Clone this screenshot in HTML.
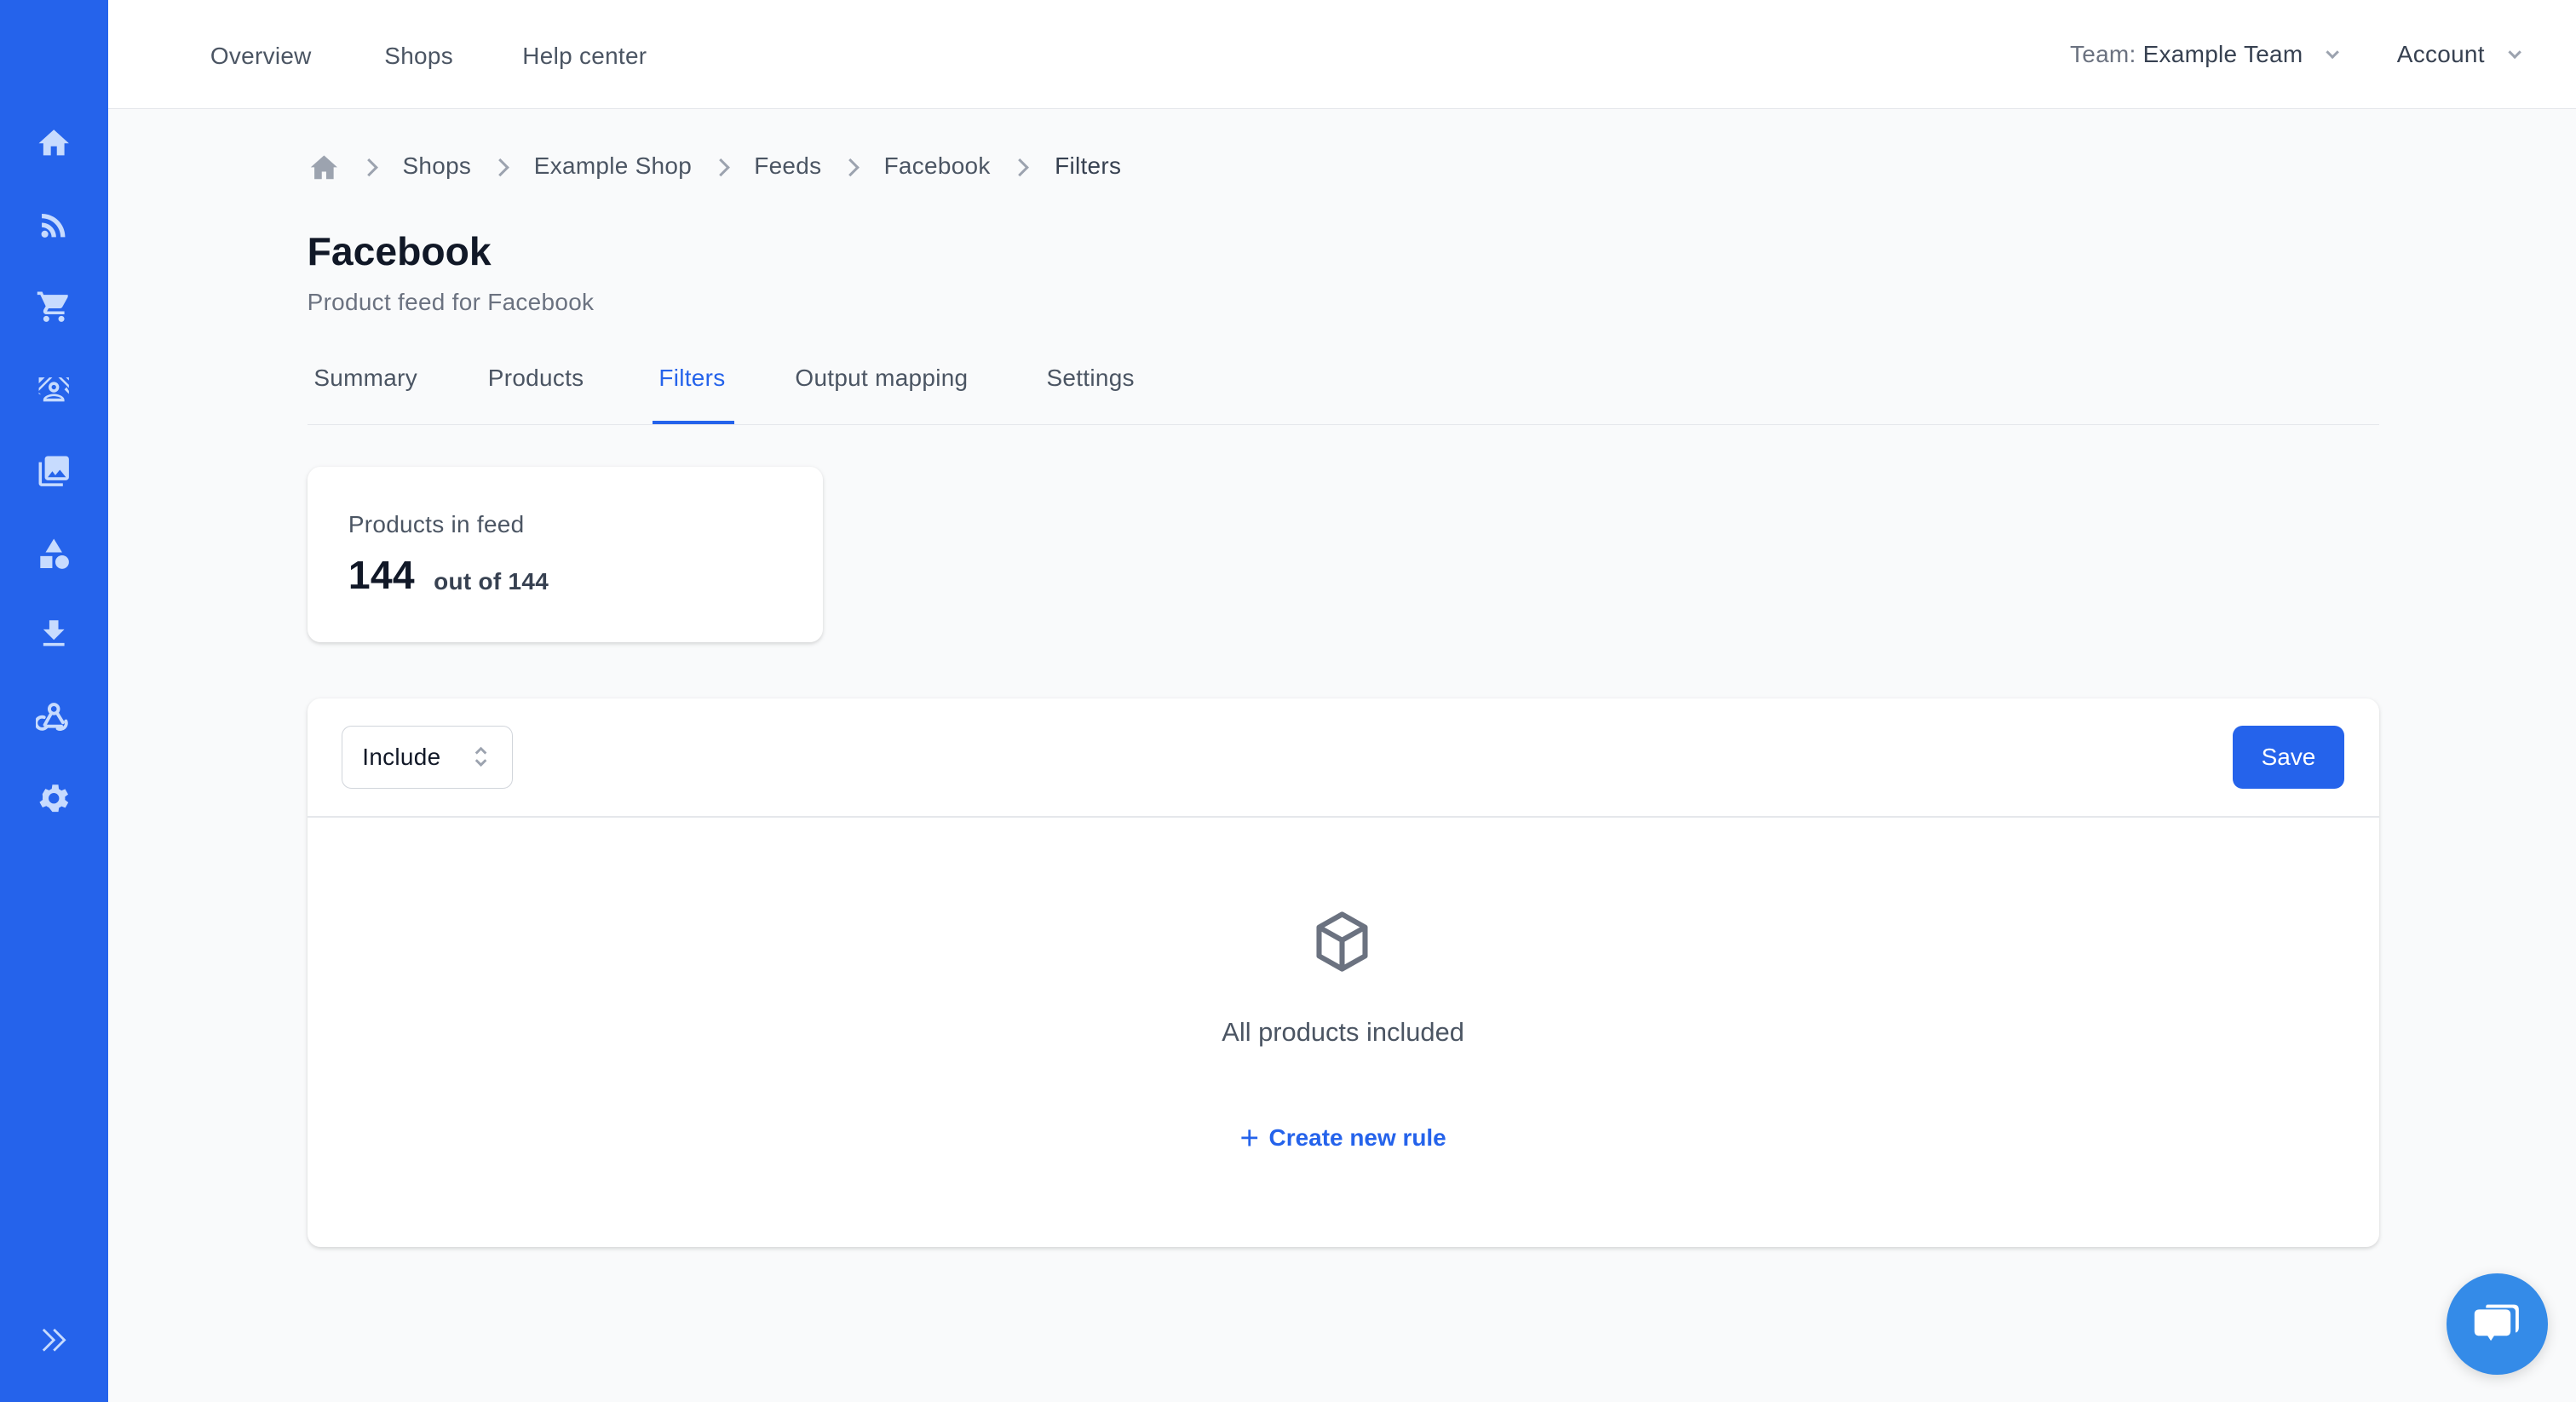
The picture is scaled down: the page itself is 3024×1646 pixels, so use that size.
<!DOCTYPE html>
<html><head><meta charset="utf-8"><style>
html,body{margin:0;padding:0;width:3024px;height:1646px;overflow:hidden;background:#f9fafb}
#r{zoom:1.92857;width:1568px;height:853.5px;position:relative;font-family:"Liberation Sans",sans-serif;color:#374151;background:#f9fafb}
.abs{position:absolute}
.side{left:0;top:0;width:66px;height:100%;background:#2563eb}
.side svg{position:absolute;left:22px;width:22px;height:22px;fill:#c7dbfe}
.top{left:66px;top:0;right:0;height:66px;background:#fff;border-bottom:1px solid #e5e7eb}
.t{position:absolute;font-size:14.5px;color:#4b5563;white-space:nowrap;letter-spacing:.15px}
.chev{position:absolute;width:6px;height:6px;border-right:1.6px solid #9ca3af;border-top:1.6px solid #9ca3af;transform:rotate(45deg)}
.dd{position:absolute;width:4px;height:4px;border-right:1.6px solid #9ca3af;border-top:1.6px solid #9ca3af;transform:rotate(135deg)}
.card{background:#fff;border-radius:8px;box-shadow:0 1px 3px rgba(0,0,0,.1),0 1px 2px rgba(0,0,0,.06)}
</style></head><body><div id="r">
<div class="abs side">
<svg style="top:76px" viewBox="0 0 24 24"><path d="M12 3L2 12h3v8h5v-6h4v6h5v-8h3z"/></svg>
<svg style="top:126px" viewBox="0 0 24 24"><circle cx="6" cy="18" r="2.3"/><path d="M4 4.5v3c6.9 0 12.5 5.6 12.5 12.5h3C19.5 11.4 12.6 4.5 4 4.5zM4 10.5v3c3.6 0 6.5 2.9 6.5 6.5h3c0-5.2-4.3-9.5-9.5-9.5z"/></svg>
<svg style="top:176px" viewBox="0 0 24 24"><path d="M7 18a2 2 0 100 4 2 2 0 000-4zM1 2v2h2l3.6 7.6-1.4 2.4C5.1 14.3 5 14.7 5 15c0 1.1.9 2 2 2h12v-2H7.4l1.1-2h7.5c.8 0 1.4-.4 1.7-1l3.6-6.5L21.3 4H5.2l-.9-2zM17 18a2 2 0 100 4 2 2 0 000-4z"/></svg>
<svg style="top:226px" viewBox="0 0 24 24"><path d="M12 7a3.5 3.5 0 100 7 3.5 3.5 0 000-7zm0 2a1.5 1.5 0 110 3 1.5 1.5 0 010-3zM2 4h4L2 8zM9 4h2L2 13v-2zM15 4h2l5 5v2zM20 4h2v2zM22 13v2l-3-3 1.5-1.5zM2 15v-1l1.5 1.5zM12 15c-3 0-7 1.5-7 4v1h14v-1c0-2.5-4-4-7-4zm-5 3c.6-.8 3-1.5 5-1.5s4.4.7 5 1.5z"/></svg>
<svg style="top:276px" viewBox="0 0 24 24"><path d="M22 16V4c0-1.1-.9-2-2-2H8c-1.1 0-2 .9-2 2v12c0 1.1.9 2 2 2h12c1.1 0 2-.9 2-2zm-11-4l2 2.7 3-3.7 4 5H8zM2 6v14c0 1.1.9 2 2 2h14v-2H4V6z"/></svg>
<svg style="top:326px" viewBox="0 0 24 24"><path d="M12 2l-5.5 9h11z"/><circle cx="17.5" cy="17.5" r="4.5"/><path d="M3 13.5h8v8H3z"/></svg>
<svg style="top:375px" viewBox="0 0 24 24"><path d="M19 9h-4V3H9v6H5l7 7 7-7zM5 18v2h14v-2z"/></svg>
<svg style="top:425px" viewBox="0 0 24 24"><g fill="none" stroke="#c7dbfe" stroke-width="2.2" stroke-linecap="round"><circle cx="12" cy="7" r="3"/><path d="M10.5 9.5L6 17.5M7 18.5h10M5.5 12.5a4 4 0 102 6M20 15a4 4 0 01-5.5 5M14 9.5l4 6.5"/></g></svg>
<svg style="top:475px" viewBox="0 0 24 24"><path d="M19.4 13a7.5 7.5 0 000-2l2.1-1.6-2-3.5-2.5 1a7 7 0 00-1.7-1L15 3h-4l-.4 2.7a7 7 0 00-1.7 1l-2.5-1-2 3.5L4.6 11a7.5 7.5 0 000 2l-2.1 1.6 2 3.5 2.5-1a7 7 0 001.7 1L11 21h4l.4-2.7a7 7 0 001.7-1l2.5 1 2-3.5zM12 15.5a3.5 3.5 0 110-7 3.5 3.5 0 010 7z"/></svg>
<svg style="top:805px" viewBox="0 0 24 24"><path d="M5 5l7 7-7 7M12 5l7 7-7 7" stroke="#c7dbfe" stroke-width="1.6" fill="none"/></svg>
</div>
<div class="abs top">
<span class="t" style="left:62px;top:26px">Overview</span>
<span class="t" style="left:168px;top:26px">Shops</span>
<span class="t" style="left:252px;top:26px">Help center</span>
<span class="t" style="left:1194px;top:25px;color:#6b7280">Team: <span style="color:#374151">Example Team</span></span>
<span class="dd" style="left:1351px;top:29px"></span>
<span class="t" style="left:1393px;top:25px;color:#374151">Account</span>
<span class="dd" style="left:1462px;top:29px"></span>
</div>
<svg class="abs" style="left:188px;top:93px;width:18px;height:18px" viewBox="0 0 20 20"><path fill="#9ca3af" d="M10 2L1 10h2.5v8h5v-5h3v5h5v-8H19z"/></svg>
<span class="chev" style="left:221px;top:98px"></span>
<span class="t" style="left:245px;top:93px">Shops</span>
<span class="chev" style="left:301px;top:98px"></span>
<span class="t" style="left:325px;top:93px">Example Shop</span>
<span class="chev" style="left:435px;top:98px"></span>
<span class="t" style="left:459px;top:93px">Feeds</span>
<span class="chev" style="left:514px;top:98px"></span>
<span class="t" style="left:538px;top:93px">Facebook</span>
<span class="chev" style="left:617px;top:98px"></span>
<span class="t" style="left:642px;top:93px;color:#374151;font-weight:500">Filters</span>
<div class="abs" style="left:187px;top:139px;font-size:24px;font-weight:bold;color:#111827">Facebook</div>
<span class="t" style="left:187px;top:176px;color:#6b7280">Product feed for Facebook</span>
<span class="t" style="left:191px;top:222px">Summary</span>
<span class="t" style="left:297px;top:222px">Products</span>
<span class="t" style="left:401px;top:222px;color:#2563eb">Filters</span>
<span class="t" style="left:484px;top:222px">Output mapping</span>
<span class="t" style="left:637px;top:222px">Settings</span>
<div class="abs" style="left:187px;top:258px;width:1261px;height:1px;background:#e5e7eb"></div>
<div class="abs" style="left:397px;top:256px;width:50px;height:2px;background:#2563eb"></div>
<div class="abs card" style="left:187px;top:284px;width:314px;height:107px">
<span class="t" style="left:25px;top:27px;color:#4b5563">Products in feed</span>
<span class="t" style="left:25px;top:52px;font-size:24px;color:#111827;font-weight:bold">144</span>
<span class="t" style="left:77px;top:62px;font-size:14.5px;color:#374151;font-weight:bold">out of 144</span>
</div>
<div class="abs card" style="left:187px;top:425px;width:1261px;height:334px">
<div class="abs" style="left:21px;top:17px;width:104px;height:38px;border:1px solid #d1d5db;border-radius:6px;box-sizing:border-box">
<span class="t" style="left:12px;top:10px;color:#111827">Include</span>
<svg class="abs" style="left:78px;top:10px;width:12px;height:16px" viewBox="0 0 12 16" fill="none" stroke="#9ca3af" stroke-width="1.5"><path d="M3 6l3-3 3 3M3 10l3 3 3-3"/></svg>
</div>
<div class="abs" style="left:1172px;top:17px;width:68px;height:38px;background:#2563eb;border-radius:6px;color:#fff;font-size:14.5px;text-align:center;line-height:38px">Save</div>
<div class="abs" style="left:0;top:72px;width:100%;height:1px;background:#e5e7eb"></div>
<svg class="abs" style="left:609px;top:127px;width:42px;height:42px" viewBox="0 0 24 24" fill="none" stroke="#6b7280" stroke-width="1.8" stroke-linejoin="round"><path d="M12 2.5l8 4.5v10l-8 4.5-8-4.5V7zM4 7l8 4.5L20 7M12 11.5v10"/></svg>
<div class="abs" style="left:0;width:100%;top:194px;text-align:center;font-size:16px;color:#4b5563">All products included</div>
<div class="abs" style="left:0;width:100%;top:257px;text-align:center;font-size:14.5px;color:#2563eb;font-weight:bold"><span style="font-weight:normal;font-size:20px;vertical-align:-2px;margin-right:6px">+</span>Create new rule</div>
</div>
<div class="abs" style="left:1489px;top:775px;width:62px;height:62px;border-radius:50%;background:#348be8;box-shadow:0 2px 8px rgba(0,0,0,.15)">
<svg class="abs" style="left:14px;top:14px;width:34px;height:34px" viewBox="0 0 34 34" fill="#fff"><path d="M11 5h16c2 0 3 1 3 3v11c0 2-1 3-2 3V9c0-1-1-2-2-2H10c0-1 0-2 1-2z"/><path d="M6 8h16c2 0 3 1 3 3v10c0 2-1 3-3 3h-7l-2 3-2-3H6c-2 0-3-1-3-3V11c0-2 1-3 3-3z"/></svg>
</div>
</div></body></html>
